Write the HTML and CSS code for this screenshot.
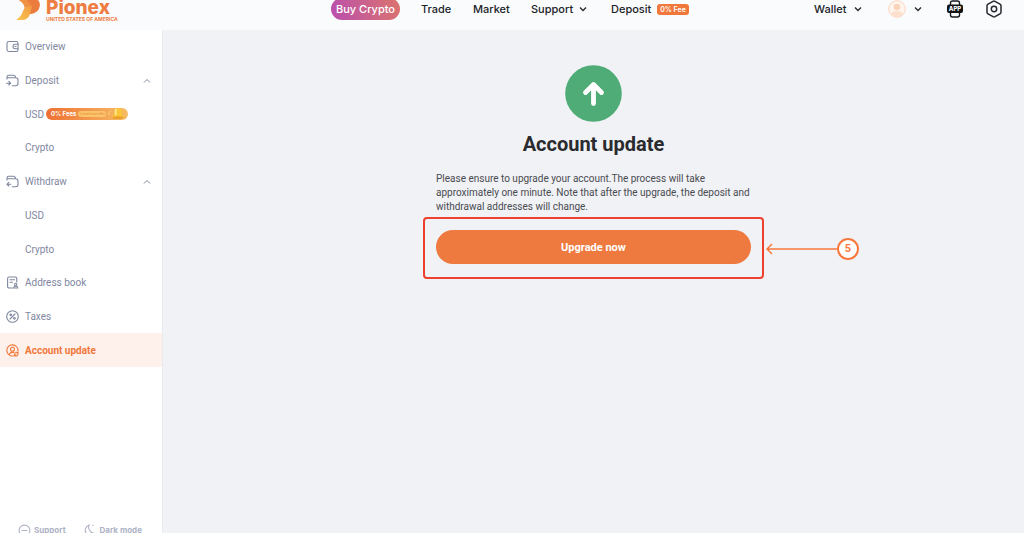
FILE: index.html
```html
<!DOCTYPE html>
<html lang="en">
<head>
<meta charset="utf-8">
<meta name="viewport" content="width=device-width, initial-scale=1">
<title>Account update - Pionex</title>
<link rel="stylesheet" href="styles.css">
</head>
<body>
<header class="topbar">
  <a class="logo" href="#">
    <svg class="logo-mark" viewBox="0 0 25 21" width="25" height="21" aria-hidden="true">
      <defs>
        <linearGradient id="gold" x1="1" y1="0" x2="0" y2="1"><stop offset="0" stop-color="#f09a42"/><stop offset="1" stop-color="#f9c653"/></linearGradient>
      </defs>
      <path d="M3 0H22Q24 2 24 5Q23 13 15 14H10V7Q7 2 3 0Z" fill="#ec7c3e"/>
      <path d="M3 0H11L16 7L9 9Q8 3 3 0Z" fill="#f09043"/>
      <path d="M9 7L16 6L14 14Q12 20 6 20H0Q5 17 7 11Z" fill="url(#gold)"/>
    </svg>
    <span class="logo-text"><span class="logo-name">Pionex</span><span class="logo-sub">UNITED STATES OF AMERICA</span></span>
  </a>
  <nav class="menu" aria-label="Main">
    <a class="buy" href="#">Buy Crypto</a>
    <a href="#">Trade</a>
    <a href="#">Market</a>
    <a class="spread" href="#">Support <svg class="chev" viewBox="0 0 8 6" width="8" height="6"><path d="M1 1.5L4 4.5L7 1.5"/></svg></a>
    <a class="spread" href="#">Deposit <span class="fee">0% Fee</span></a>
  </nav>
  <div class="tools">
    <a class="wallet spread" href="#">Wallet <svg class="chev" viewBox="0 0 8 6" width="8" height="6"><path d="M1 1.5L4 4.5L7 1.5"/></svg></a>
    <button class="profile spread" type="button" aria-label="Profile">
      <svg viewBox="0 0 18 18" width="18" height="18"><circle cx="9" cy="9" r="8.3" fill="#fff5ee" stroke="#fbd5bd" stroke-width="1"/><circle cx="9" cy="7" r="3.3" fill="#fbd3ba"/><path d="M3 14Q4 11 9 11Q14 11 15 14Q12 17 9 17Q6 17 3 14Z" fill="#fcdfcd"/></svg>
      <svg class="chev" viewBox="0 0 8 6" width="8" height="6"><path d="M1 1.5L4 4.5L7 1.5"/></svg>
    </button>
    <button class="app" type="button" aria-label="App">
      <svg viewBox="0 0 16 18" width="16" height="18"><rect x="3.5" y="1" width="9" height="16" rx="2" fill="none" stroke="#17191c" stroke-width="1.4"/><rect x="0" y="4.5" width="16" height="8.5" rx="2" fill="#101214"/><text class="app-text" x="8" y="11" text-anchor="middle">APP</text></svg>
    </button>
    <button type="button" aria-label="Settings">
      <svg viewBox="0 0 16 18" width="16" height="18" fill="none" stroke="#25282c" stroke-width="1.5"><path d="M7 1.3Q8 .8 9 1.3L14 4.2Q15 4.8 15 5.8V12.2Q15 13.2 14 13.8L9 16.7Q8 17.2 7 16.7L2 13.8Q1 13.2 1 12.2V5.8Q1 4.8 2 4.2Z"/><circle cx="8" cy="9" r="2.7"/></svg>
    </button>
  </div>
</header>
<div class="layout">
  <aside class="sidebar">
    <nav class="side-nav" aria-label="Account">
      <a class="item" href="#"><svg class="ico" viewBox="0 0 13 13"><rect x="1" y="1.5" width="11" height="10" rx="1.8"/><path d="M12 4.3H9.2A2.2 2.2 0 0 0 9.2 8.7H12M9 6.5H10"/></svg>Overview</a>
      <a class="item" href="#"><svg class="ico" viewBox="0 0 13 13"><path d="M1 5V3Q1 1.3 2.7 1.3H7.5Q9 1.3 9.5 3M1 3.8H9.7Q12 3.8 12 6V9.5Q12 11.7 9.8 11.7H6.3M.5 9.2H4.3M2.8 7.4L4.6 9.2L2.8 11"/></svg>Deposit<svg class="fold" viewBox="0 0 8 6" width="8" height="6"><path d="M1 4.5L4 1.5L7 4.5"/></svg></a>
      <a class="item sub" href="#">USD <span class="promo"><b>0% Fees</b><span class="promo-pill">Limited time offer</span><svg class="bell" viewBox="0 0 18 12" width="18" height="12"><path d="M1 7Q0 4 3 3" fill="none" stroke="#ffd26b"/><path d="M7 2Q7 0 10 0Q14 0 14 3V7L16 9H4L6 7Z" fill="#fbc53a"/><path d="M8 1Q7 4 8 7" fill="none" stroke="#fff0a0" stroke-width="1.5"/><ellipse cx="10" cy="9.6" rx="5.5" ry="1.2" fill="#e99b26"/></svg></span></a>
      <a class="item sub" href="#">Crypto</a>
      <a class="item" href="#"><svg class="ico" viewBox="0 0 13 13"><path d="M1 5V3Q1 1.3 2.7 1.3H7.5Q9 1.3 9.5 3M1 3.8H9.7Q12 3.8 12 6V9.5Q12 11.7 9.8 11.7H6.3M4.8 9.2H1M2.8 7.4L1 9.2L2.8 11"/></svg>Withdraw<svg class="fold" viewBox="0 0 8 6" width="8" height="6"><path d="M1 4.5L4 1.5L7 4.5"/></svg></a>
      <a class="item sub" href="#">USD</a>
      <a class="item sub" href="#">Crypto</a>
      <a class="item" href="#"><svg class="ico" viewBox="0 0 13 13"><path d="M6.5 12H3.2Q1.6 12 1.6 10.4V2.6Q1.6 1 3.2 1H9.2Q10.8 1 10.8 2.6V6M4 3.7H8.5M4 6.3H6.5"/><circle cx="9.7" cy="8.5" r="1.2"/><path d="M7.6 12Q7.7 10.2 9.7 10.2Q11.7 10.2 11.8 12Z"/></svg>Address book</a>
      <a class="item" href="#"><svg class="ico" viewBox="0 0 13 13"><circle cx="6.5" cy="6.5" r="5.8"/><path d="M4 9L9 4"/><circle cx="4.7" cy="4.8" r=".8"/><circle cx="8.4" cy="8.3" r=".8"/></svg>Taxes</a>
      <a class="item active" href="#" aria-current="page"><svg class="ico" viewBox="0 0 13 13"><path d="M7 12A5.6 5.6 0 1 1 12 7"/><circle cx="6.5" cy="5.2" r="2"/><path d="M3 10.4Q4 8.4 6.5 8.4H7.5"/><path d="M12 9A2 2 0 0 0 8.5 9.8M8.4 11A2 2 0 0 0 12 10.5M12.1 8V9.2H11M8.3 12V10.9H9.4"/></svg>Account update</a>
    </nav>
    <div class="side-foot">
      <a href="#"><svg class="ico" viewBox="0 0 13 13"><circle cx="6.5" cy="6.5" r="5.4"/><path d="M4 6.5H9"/></svg>Support</a>
      <button type="button"><svg class="ico" viewBox="0 0 13 13"><path d="M5 1A5.8 5.8 0 1 0 12 9.5A6.5 6.5 0 0 1 5 1ZM8.5 1.5H9"/></svg>Dark mode</button>
    </div>
  </aside>
  <main class="content">
    <section class="panel">
      <svg class="badge" viewBox="0 0 57 57" width="57" height="57" aria-hidden="true"><circle cx="28.5" cy="28.5" r="28.3" fill="#4fac76"/><path d="M28.5 38.5V20M20.5 27.5L28.5 19.5L36.5 27.5" fill="none" stroke="#fff" stroke-width="4.8" stroke-linecap="round" stroke-linejoin="round"/></svg>
      <h1>Account update</h1>
      <p>Please ensure to upgrade your account.The process will take approximately one minute. Note that after the upgrade, the deposit and withdrawal addresses will change.</p>
      <div class="action">
        <button class="upgrade" type="button">Upgrade now</button>
        <div class="frame"></div>
        <div class="callout">
          <svg viewBox="0 0 71 12" width="71" height="12" aria-hidden="true"><path d="M1 6H71M6 1L1 6L6 11"/></svg>
          <span class="step">5</span>
        </div>
      </div>
    </section>
  </main>
</div>
</body>
</html>
```
FILE: styles.css
```css
* { box-sizing: border-box; }
body {
  margin: 0;
  height: 100vh;
  display: flex;
  flex-direction: column;
  overflow: hidden;
  background: #f1f2f6;
  font-family: Roboto, "Liberation Sans", sans-serif;
  font-size: 10px;
  color: #7f879f;
}
a { color: inherit; text-decoration: none; }
button {
  padding: 0;
  border: 0;
  background: none;
  font: inherit;
  color: inherit;
}
svg { display: block; flex: none; }

.topbar {
  flex: none;
  display: flex;
  align-items: flex-start;
  height: 30px;
  padding: 0 22px 0 16px;
  background: #fafbfd;
  font: 500 11px/18px Inter, sans-serif;
  color: #202327;
}
.logo { display: flex; gap: 5px; width: 98px; color: #ed7d42; }
.logo-text { display: flex; flex-direction: column; white-space: nowrap; }
.logo-name { font-size: 19px; font-weight: 800; line-height: 16px; }
.logo-sub { font-size: 5px; font-weight: 700; line-height: 6px; }
.menu {
  display: grid;
  grid-template-columns: 69px 31px 37px 59px 78px;
  grid-template-rows: 18px;
  gap: 21px;
  align-items: center;
  margin-left: 217px;
  white-space: nowrap;
}
.buy {
  height: 22px;
  border-radius: 11px;
  background: linear-gradient(75deg, #b94fae, #dc746d);
  color: #fff;
  line-height: 22px;
  text-align: center;
}
.spread { display: flex; align-items: center; justify-content: space-between; }
.chev { fill: none; stroke: #25282c; stroke-width: 1.3; }
.menu .chev { margin-right: 3px; }
.fee {
  width: 32px;
  border-radius: 3px;
  background: #f0783a;
  color: #fff;
  font-size: 7px;
  font-weight: 600;
  line-height: 11px;
  text-align: center;
}
.tools { display: flex; align-items: center; height: 18px; margin-left: auto; }
.wallet { width: 48px; }
.profile { width: 34px; margin-left: 26px; }
.app { margin: 0 23px 0 25px; }
.app-text { font: 800 6px Inter, sans-serif; fill: #fff; }

.layout { flex: 1; display: flex; min-height: 0; }
.sidebar {
  flex: none;
  display: flex;
  flex-direction: column;
  justify-content: space-between;
  width: 163px;
  background: #fff;
  border-right: 1px solid #e9ebf1;
}
.side-nav { display: flex; flex-direction: column; height: 337px; }
.item {
  flex: 1;
  display: flex;
  align-items: center;
  gap: 6px;
  padding: 0 11px 0 6px;
}
.item.sub { gap: 2px; padding-left: 25px; }
.item.active { background: #fef0ea; color: #f0783a; font-weight: 700; }
.ico {
  width: 13px;
  height: 13px;
  fill: none;
  stroke: currentColor;
  stroke-width: 1.1;
  stroke-linecap: round;
}
.fold { margin-left: auto; fill: none; stroke: currentColor; }
.promo {
  display: flex;
  align-items: center;
  gap: 2px;
  width: 82px;
  height: 12px;
  padding-left: 5px;
  border-radius: 6px;
  background: linear-gradient(90deg, #ee7033, #f6bd65);
  color: #fff;
  font: 6px/12px Inter, sans-serif;
  white-space: nowrap;
}
.promo-pill {
  width: 28px;
  border-radius: 3px;
  background: #fbc36a;
  color: #e58a35;
  font-size: 3px;
  line-height: 6px;
  text-align: center;
}
.side-foot {
  display: flex;
  gap: 18px;
  height: 10px;
  padding-left: 18px;
  color: #adb3c6;
  font: 700 8px/14px Inter, sans-serif;
}
.side-foot a, .side-foot button {
  display: flex;
  align-items: center;
  gap: 3px;
  height: 14px;
}

.content { flex: 1; padding: 35px 20px; }
.panel {
  display: flex;
  flex-direction: column;
  align-items: center;
  max-width: 315px;
  margin: 0 auto;
  color: #494b50;
}
h1 { margin: 10px 0 15px; color: #292b2f; font-size: 20px; line-height: 25px; }
p { margin: 0 0 16px; line-height: 14px; }
.action { position: relative; width: 100%; }
.upgrade {
  width: 100%;
  height: 34px;
  border-radius: 17px;
  background: #ee7a3f;
  color: #fff;
  font-size: 11px;
  font-weight: 700;
}
.frame {
  position: absolute;
  inset: -13px -13px -15px;
  border: 2px solid #ee412d;
  border-radius: 4px;
  pointer-events: none;
}
.callout {
  position: absolute;
  top: 8px;
  left: 100%;
  display: flex;
  align-items: center;
  padding-left: 15px;
}
.callout path { fill: none; stroke: #f9783d; stroke-width: 1.5; }
.step {
  width: 22px;
  height: 22px;
  border: 2px solid #f9783d;
  border-radius: 50%;
  background: #fff;
  color: #f9783d;
  font-size: 11px;
  font-weight: 700;
  line-height: 18px;
  text-align: center;
}
```
